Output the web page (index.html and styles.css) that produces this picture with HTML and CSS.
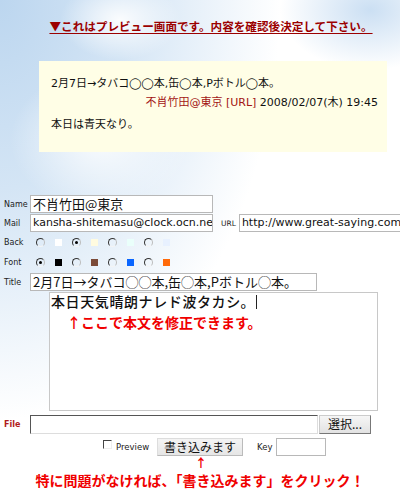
FILE: index.html
```html
<!DOCTYPE html>
<html lang="ja">
<head>
  <meta charset="UTF-8" />
  <title>プレビュー</title>
  <link rel="stylesheet" href="styles.css">
</head>
<body>
  <div class="page">
    <p class="notice">▼これはプレビュー画面です。内容を確認後決定して下さい。</p>

    <div class="preview">
      <div class="p-title">2月7日→タバコ◯◯本,缶◯本,Pボトル◯本。</div>
      <div class="p-meta"><span class="author">不肖竹田@東京 [URL]</span> 2008/02/07(木) 19:45</div>
      <div class="p-body">本日は青天なり。</div>
    </div>

    <form class="post">
      <div class="row">
        <label class="lbl">Name</label>
        <div class="field name">不肖竹田@東京</div>
      </div>
      <div class="row">
        <label class="lbl">Mail</label>
        <div class="field mail">kansha-shitemasu@clock.ocn.ne</div>
        <label class="lbl url-lbl">URL</label>
        <div class="field url">http://www.great-saying.com</div>
      </div>
      <div class="row colors">
        <label class="lbl">Back</label>
        <span class="radio"></span><span class="sw" style="background:#ffffff"></span>
        <span class="radio on"></span><span class="sw" style="background:#fffbe0"></span>
        <span class="radio"></span><span class="sw" style="background:#eafffb"></span>
        <span class="radio"></span><span class="sw" style="background:#e8f1ff"></span>
      </div>
      <div class="row colors">
        <label class="lbl">Font</label>
        <span class="radio on"></span><span class="sw" style="background:#000000"></span>
        <span class="radio"></span><span class="sw" style="background:#7b4a38"></span>
        <span class="radio"></span><span class="sw" style="background:#0a66ff"></span>
        <span class="radio"></span><span class="sw" style="background:#ff6a0a"></span>
      </div>
      <div class="row">
        <label class="lbl">Title</label>
        <div class="field title">2月7日→タバコ◯◯本,缶◯本,Pボトル◯本。</div>
      </div>
      <div class="body-box">
        <div class="typed">本日天気晴朗ナレド波タカシ。<span class="caret"></span></div>
        <div class="hint">↑ここで本文を修正できます。</div>
      </div>
      <div class="row file-row">
        <label class="lbl file-lbl">File</label>
        <div class="file-box"></div>
        <button type="button" class="btn pick">選択...</button>
      </div>
      <div class="submit-row">
        <span class="check"></span>
        <span class="small">Preview</span>
        <button type="button" class="btn send">書き込みます</button>
        <span class="small key">Key</span>
        <div class="field keybox"></div>
      </div>
      <div class="up">↑</div>
      <p class="guide">特に問題がなければ、「書き込みます」をクリック！</p>
    </form>
  </div>
</body>
</html>
```

FILE: styles.css
```css
body {
  margin: 0;
  font-family: "Noto Sans CJK JP", sans-serif;
  background: #fff;
  overflow: hidden;
}
.page {
  width: 400px;
  height: 495px;
  overflow: hidden;
  background:
    radial-gradient(ellipse 60px 40px at 120px 20px, rgba(255,255,255,0.9), rgba(255,255,255,0) 100%),
    radial-gradient(ellipse 90px 70px at 100px 140px, rgba(255,255,255,0.85), rgba(255,255,255,0) 100%),
    radial-gradient(ellipse 90px 60px at 370px 10px, rgba(190,215,240,0.8), rgba(190,215,240,0) 100%),
    radial-gradient(ellipse 280px 420px at 0 0, #bcd6ef 0%, #d4e5f5 45%, rgba(255,255,255,0) 100%),
    #fff;
}
.notice {
  margin: 0;
  padding: 18px 0 0 22px;
  text-align: center;
  font-size: 11.6px;
  font-weight: bold;
  color: #9b0000;
  text-decoration: underline;
  text-underline-offset: 2px;
  line-height: 16px;
}
.preview {
  margin: 27px 13px 0 39px;
  height: 91px;
  box-sizing: border-box;
  background: #fffee6;
  padding: 13px 9px 0 12px;
  font-family: "DejaVu Sans", "Noto Sans CJK JP", sans-serif;
  font-size: 11px;
  line-height: 19px;
  color: #111;
}
.p-meta {
  text-align: right;
  margin-bottom: 3px;
}
.author {
  color: #a31414;
}
.post {
  margin-top: 43px;
}
.row {
  display: flex;
  align-items: center;
  height: 18px;
  margin-bottom: 1px;
}
.lbl {
  width: 26px;
  padding-left: 4px;
  font-family: "DejaVu Sans", sans-serif;
  font-size: 8px;
  color: #222;
  flex: none;
}
.field {
  box-sizing: border-box;
  height: 18px;
  border: 1px solid #b8b8b8;
  background: #fff;
  padding-left: 2px;
  white-space: nowrap;
  overflow: hidden;
  color: #111;
  flex: none;
}
.name {
  width: 183px;
  font-size: 13px;
  line-height: 16px;
}
.mail {
  width: 183px;
  font-family: "DejaVu Sans", sans-serif;
  font-size: 11px;
  line-height: 16px;
}
.url-lbl {
  width: auto;
  padding: 0 3px 0 8px;
  font-size: 7.5px;
}
.url {
  width: 170px;
  font-family: "DejaVu Sans", sans-serif;
  font-size: 11px;
  line-height: 16px;
}
.colors {
  height: 19px;
}
.radio {
  box-sizing: border-box;
  width: 9px;
  height: 9px;
  margin-left: 6px;
  margin-right: 10px;
  border-radius: 50%;
  border: 1px solid;
  border-color: #333 #bbb #f4f4f4 #333;
  position: relative;
  flex: none;
}
.radio.on::after {
  content: "";
  position: absolute;
  left: 2px;
  top: 2px;
  width: 3px;
  height: 3px;
  border-radius: 50%;
  background: #000;
}
.sw {
  width: 7px;
  height: 7px;
  margin-right: 4px;
  flex: none;
}
.title {
  width: 287px;
  font-size: 13px;
  line-height: 16px;
}
.body-box {
  box-sizing: border-box;
  margin: 1px 0 0 49px;
  width: 329px;
  height: 119px;
  border: 1px solid #c8c8c8;
  background: #fff;
  padding: 0 0 0 1px;
}
.typed {
  font-size: 14px;
  font-weight: 500;
  line-height: 16px;
  color: #111;
  letter-spacing: 0.6px;
}
.caret {
  display: inline-block;
  width: 1px;
  height: 14px;
  background: #222;
  vertical-align: -2px;
  margin-left: 1px;
}
.hint {
  margin: 5px 0 0 16px;
  font-size: 14px;
  font-weight: bold;
  color: #f00000;
  line-height: 16px;
}
.file-row {
  margin-top: 3px;
  height: 20px;
}
.file-lbl {
  color: #b01c1c;
  font-weight: bold;
}
.file-box {
  box-sizing: border-box;
  width: 288px;
  height: 19px;
  border: 1px solid;
  border-color: #555 #ddd #ddd #555;
  background: #fff;
}
.btn {
  font-family: "Noto Sans CJK JP", sans-serif;
  font-size: 12px;
  color: #111;
  background: linear-gradient(#f6f6f6, #e2e2e2);
  border: 1px solid;
  border-color: #ccc #777 #777 #ccc;
  padding: 0;
  height: 19px;
  line-height: 16px;
}
.pick {
  width: 52px;
  margin-left: 1px;
}
.submit-row {
  display: flex;
  align-items: center;
  height: 18px;
  margin-top: 4px;
  padding-left: 103px;
}
.check {
  box-sizing: border-box;
  width: 9px;
  height: 9px;
  border: 1px solid;
  border-color: #444 #eee #eee #444;
  margin-top: -6px;
}
.small {
  font-family: "DejaVu Sans", sans-serif;
  font-size: 8.5px;
  color: #222;
  margin: 0 8px 0 4px;
}
.send {
  width: 86px;
  height: 18px;
  border-color: #ddd #bbb #bbb #ddd;
  background: linear-gradient(#f4f4f4, #e6e6e6);
}
.key {
  margin: 0 3px 0 14px;
}
.keybox {
  width: 50px;
}
.up {
  width: 12px;
  height: 14px;
  margin: 0 0 0 195px;
  color: #f00000;
  font-size: 12px;
  font-weight: bold;
  line-height: 14px;
}
.guide {
  margin: 1px 0 0;
  text-align: center;
  font-size: 14px;
  font-weight: bold;
  color: #f00000;
  line-height: 18px;
}
```
